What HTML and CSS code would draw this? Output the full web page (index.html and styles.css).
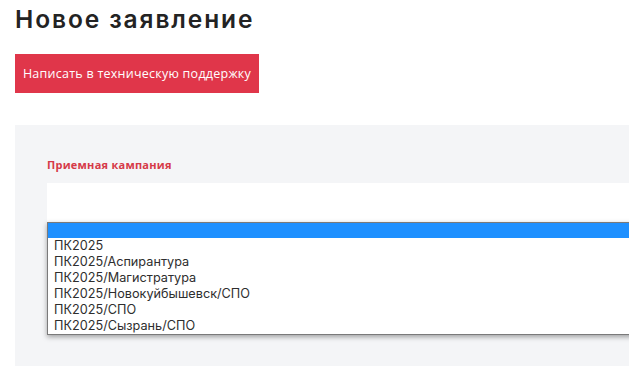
FILE: index.html
```html
<!DOCTYPE html>
<html lang="ru">
<head>
<meta charset="utf-8">
<link rel="stylesheet" href="styles.css">
</head>
<body>
<div class="page">
  <h1 class="title">Новое заявление</h1>
  <button class="support-btn" type="button">Написать в техническую поддержку</button>
  <section class="panel">
    <label class="field-label">Приемная кампания</label>
    <div class="field">
      <div class="select-box"></div>
      <ul class="dropdown">
        <li class="opt opt-active">&nbsp;</li>
        <li class="opt">ПК2025</li>
        <li class="opt">ПК2025/Аспирантура</li>
        <li class="opt">ПК2025/Магистратура</li>
        <li class="opt">ПК2025/Новокуйбышевск/СПО</li>
        <li class="opt">ПК2025/СПО</li>
        <li class="opt">ПК2025/Сызрань/СПО</li>
      </ul>
    </div>
  </section>
</div>
</body>
</html>
```
FILE: styles.css
```css
html, body {
  margin: 0;
  padding: 0;
  background: #ffffff;
  overflow: hidden;
}
body {
  font-family: "Open Sans", "Noto Sans", "DejaVu Sans", sans-serif;
  width: 629px;
  height: 374px;
}
.page {
  padding: 0 0 0 15px;
  width: 760px;
}
.title {
  margin: 0;
  padding-top: 3px;
  font-family: Inter, "Open Sans", sans-serif;
  font-size: 24.5px;
  line-height: 32px;
  font-weight: 600;
  color: #232323;
  letter-spacing: 1.9px;
}
.support-btn {
  display: block;
  margin-top: 19px;
  width: 244px;
  height: 39px;
  border: 0;
  padding: 0;
  background: #e0364a;
  color: #ffffff;
  font-family: inherit;
  font-size: 12.5px;
  font-weight: 500;
  letter-spacing: 0.25px;
  text-align: center;
}
.panel {
  margin-top: 32px;
  background: #f4f5f7;
  height: 241px;
  padding: 32px 0 0 32px;
  box-sizing: border-box;
}
.field-label {
  display: block;
  font-size: 11px;
  font-weight: 700;
  line-height: 16px;
  color: #d63a48;
  letter-spacing: 0.25px;
  margin-bottom: 10px;
}
.field {
  position: relative;
}
.select-box {
  height: 39px;
  background: #ffffff;
}
.dropdown {
  position: absolute;
  top: 39px;
  left: 0;
  width: 700px;
  margin: 0;
  padding: 0;
  list-style: none;
  background: #ffffff;
  border: 1px solid #7a7a7a;
  box-shadow: 0 2px 5px rgba(0, 0, 0, 0.35);
}
.opt {
  height: 16px;
  line-height: 16px;
  padding-left: 6px;
  font-family: Inter, "Open Sans", sans-serif;
  font-size: 12.7px;
  color: #2e2e2e;
  white-space: nowrap;
}
.opt-active {
  background: #1e90ff;
  height: 15px;
}
```
